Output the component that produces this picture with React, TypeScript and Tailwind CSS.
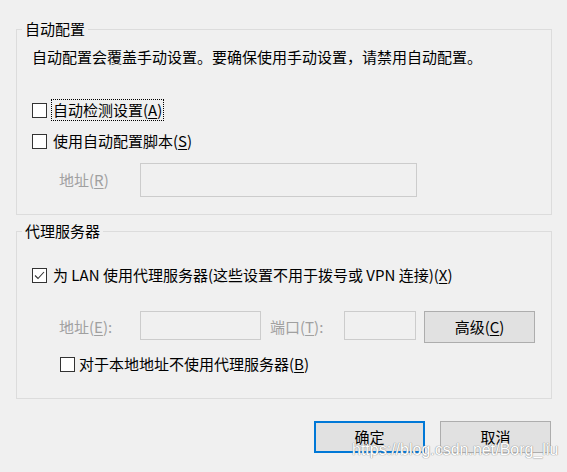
import React from 'react';

const FONT = "font-['Segoe_UI','Noto_Sans_CJK_SC',sans-serif]";

function Key({ k }: { k: string }) {
  return (
    <>
      (<span className="underline underline-offset-[2px] decoration-1">{k}</span>)
    </>
  );
}

function Box({ checked = false }: { checked?: boolean }) {
  return (
    <span className="w-[15px] h-[15px] shrink-0 border border-[#333333] bg-white flex items-center justify-center">
      {checked && (
        <svg width="13" height="13" viewBox="0 0 13 13" fill="none">
          <path d="M2 6.5 L5 9.5 L11 3" stroke="#333333" strokeWidth="1.1" />
        </svg>
      )}
    </span>
  );
}

function Field({ className }: { className: string }) {
  return <div className={`border border-[#cccccc] bg-[#f0f0f0] ${className}`} />;
}

function Btn({ children, primary = false }: { children: React.ReactNode; primary?: boolean }) {
  return (
    <button
      className={`w-[111px] h-[32px] bg-[#e1e1e1] flex items-center justify-center ${
        primary ? 'border-2 border-[#0078d7]' : 'border border-[#adadad]'
      }`}
    >
      {children}
    </button>
  );
}

export default function App() {
  return (
    <div className={`relative w-[567px] h-[472px] overflow-hidden bg-[#f0f0f0] text-black text-[15px] leading-[20px] ${FONT}`}>
      <div className="pl-4 pr-[15px] pt-[19px]">
        {/* 自动配置 */}
        <fieldset className="border border-[#dcdcdc] h-[196px]">
          <legend className="ml-[5px] px-[3px]">自动配置</legend>
          <div className="pl-[15px]">
            <p className="mt-[8px]">自动配置会覆盖手动设置。要确保使用手动设置，请禁用自动配置。</p>

            <div className="mt-[32px] flex items-center h-[22px]">
              <Box />
              <span className="ml-[4px] px-[1px] border border-dotted border-black">
                自动检测设置<Key k="A" />
              </span>
            </div>

            <div className="mt-[10px] flex items-center h-[20px]">
              <Box />
              <span className="ml-[6px]">
                使用自动配置脚本<Key k="S" />
              </span>
            </div>

            <div className="mt-[12px] ml-[27px] flex items-center">
              <span className="w-[81px] text-[#a0a0a0]">
                地址<Key k="R" />
              </span>
              <Field className="w-[277px] h-[34px]" />
            </div>
          </div>
        </fieldset>

        {/* 代理服务器 */}
        <fieldset className="mt-[6px] border border-[#dcdcdc] h-[178px]">
          <legend className="ml-[5px] px-[3px]">代理服务器</legend>
          <div className="pl-[15px]">
            <div className="mt-[24px] flex items-center h-[20px]">
              <Box checked />
              <span className="ml-[6px]">
                为 LAN 使用代理服务器(这些设置不用于拨号或 VPN 连接)<Key k="X" />
              </span>
            </div>

            <div className="mt-[26px] ml-[27px] flex items-start">
              <span className="mt-[6px] w-[81px] text-[#a0a0a0]">
                地址<Key k="E" />:
              </span>
              <Field className="w-[121px] h-[29px]" />
              <span className="mt-[6px] ml-[9px] w-[74px] text-[#a0a0a0]">
                端口<Key k="T" />:
              </span>
              <Field className="w-[72px] h-[29px]" />
              <div className="ml-[8px]">
                <Btn>
                  高级<Key k="C" />
                </Btn>
              </div>
            </div>

            <div className="mt-[11px] ml-[28px] flex items-center h-[20px]">
              <Box />
              <span className="ml-[4px]">
                对于本地地址不使用代理服务器<Key k="B" />
              </span>
            </div>
          </div>
        </fieldset>
      </div>

      <div className="mt-[22px] pr-4 flex justify-end gap-[15px]">
        <Btn primary>确定</Btn>
        <Btn>取消</Btn>
      </div>

      {/* watermark */}
      <span className="absolute left-[352px] top-[440px] text-[16px] leading-[19px] text-white font-['Liberation_Sans',sans-serif] [text-shadow:0_0_1px_#8a8a8a,0_0_1px_#8a8a8a]">
        https://blog.csdn.net/Borg_liu
      </span>
    </div>
  );
}
